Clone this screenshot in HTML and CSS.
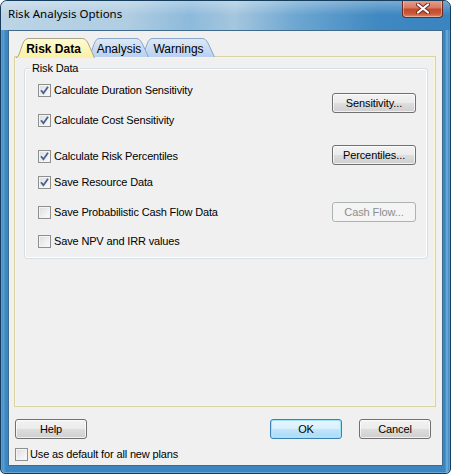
FILE: index.html
```html
<!DOCTYPE html>
<html lang="en">
<head>
<meta charset="utf-8">
<title>Risk Analysis Options</title>
<link rel="stylesheet" href="styles.css">
</head>
<body>
<div class="window">
  <div class="titlebar">
    <span class="title">Risk Analysis Options</span>
    <button class="close" type="button" aria-label="Close">
      <svg width="14" height="11" viewBox="0 0 14 11">
        <path d="M2 1.5 L12 9.5 M12 1.5 L2 9.5" stroke="#6b2a20" stroke-width="4" stroke-linecap="round"/>
        <path d="M2 1.5 L12 9.5 M12 1.5 L2 9.5" stroke="#ffffff" stroke-width="2.2" stroke-linecap="round"/>
      </svg>
    </button>
  </div>

  <div class="client">
    <div class="tabs">
      <div class="tab tab-active">
        <svg class="tab-shape" width="80" height="20" viewBox="0 0 80 20">
          <defs>
            <linearGradient id="gActive" x1="0" y1="0" x2="0" y2="1">
              <stop offset="0" stop-color="#fffbd2"/>
              <stop offset="1" stop-color="#fbf0a4"/>
            </linearGradient>
          </defs>
          <path d="M0.5 20 C6 20 6 0.5 13 0.5 H67 C70 0.5 71 2 73 5 L79.5 20" fill="url(#gActive)" stroke="#a9a58a"/>
        </svg>
        <span class="tab-label">Risk Data</span>
      </div>
      <div class="tab tab-second">
        <svg class="tab-shape" width="62" height="19" viewBox="0 0 62 19">
          <defs>
            <linearGradient id="gTab" x1="0" y1="0" x2="0" y2="1">
              <stop offset="0" stop-color="#dde9f7"/>
              <stop offset="1" stop-color="#b9d0ee"/>
            </linearGradient>
          </defs>
          <path d="M0.5 19 C5 19 6 0.5 12 0.5 H49 C52 0.5 53 2 55 5 L61.5 19" fill="url(#gTab)" stroke="#8aa6c9"/>
        </svg>
        <span class="tab-label">Analysis</span>
      </div>
      <div class="tab tab-third">
        <svg class="tab-shape" width="75" height="19" viewBox="0 0 75 19">
          <path d="M0.5 19 C5 19 6 0.5 12 0.5 H62 C65 0.5 66 2 68 5 L74.5 19" fill="url(#gTab)" stroke="#8aa6c9"/>
        </svg>
        <span class="tab-label">Warnings</span>
      </div>
    </div>

    <div class="panel">
      <div class="group">
        <span class="group-label">Risk Data</span>
        <div class="options">
          <label class="check row-1"><span class="box checked"></span>Calculate Duration Sensitivity</label>
          <button class="btn btn-sensitivity" type="button">Sensitivity...</button>
          <label class="check row-2"><span class="box checked"></span>Calculate Cost Sensitivity</label>
          <label class="check row-3"><span class="box checked"></span>Calculate Risk Percentiles</label>
          <button class="btn btn-percentiles" type="button">Percentiles...</button>
          <label class="check row-4"><span class="box checked"></span>Save Resource Data</label>
          <label class="check row-5"><span class="box"></span>Save Probabilistic Cash Flow Data</label>
          <button class="btn btn-cashflow" type="button" disabled>Cash Flow...</button>
          <label class="check row-6"><span class="box"></span>Save NPV and IRR values</label>
        </div>
      </div>
    </div>

    <div class="actions">
      <button class="btn btn-wide" type="button">Help</button>
      <span class="spacer"></span>
      <button class="btn btn-wide btn-default" type="button">OK</button>
      <button class="btn btn-wide" type="button">Cancel</button>
    </div>

    <label class="check default-check"><span class="box"></span>Use as default for all new plans</label>
  </div>
</div>
</body>
</html>
```

FILE: styles.css
```css
* {
  box-sizing: border-box;
}

html,
body {
  margin: 0;
  padding: 0;
  background: #ffffff;
}

body {
  font-family: "Liberation Sans", Arial, sans-serif;
  font-size: 11px;
  letter-spacing: -0.15px;
  color: #000000;
}

/* ---------- window frame ---------- */

.window {
  width: 451px;
  height: 474px;
  display: flex;
  flex-direction: column;
  padding: 0 7px 7px 7px;
  border-radius: 7px 7px 5px 5px;
  border: 1px solid #173d5c;
  background:
    linear-gradient(to right, #2a6ea5 0, #5aa0d3 2px, #3b86c1 5px, #3b86c1 calc(100% - 5px), #6eb3e0 calc(100% - 3px), #2a6ea5 100%);
  box-shadow: inset 0 0 0 1px rgba(255,255,255,0.25);
  overflow: hidden;
}

.titlebar {
  height: 29px;
  flex: none;
  display: flex;
  align-items: flex-start;
  justify-content: space-between;
  margin: 0 -7px;
  padding: 0 7px;
  background:
    linear-gradient(to bottom, rgba(255,255,255,0.3) 0, rgba(255,255,255,0) 14px),
    linear-gradient(to right, #bcd4e6 0%, #b0cde2 28%, #8dbadb 42%, #a5c6de 52%, #6ca6d1 66%, #3f88c1 84%, #3a84bf 100%);
}

.title {
  font-family: "Noto Sans", "Open Sans", sans-serif;
  font-size: 11.5px;
  letter-spacing: 0;
  line-height: 14px;
  margin-top: 6px;
  margin-left: 0;
  color: #000000;
}

.close {
  width: 41px;
  height: 18px;
  margin-top: -1px;
  margin-right: 0;
  padding: 0;
  border: 1px solid #6d2a22;
  border-top: none;
  border-radius: 0 0 4px 4px;
  background: linear-gradient(to bottom, #e5a291 0%, #d77a64 45%, #c44a2e 55%, #c9583a 80%, #e08866 100%);
  box-shadow: inset 0 0 0 1px rgba(255,255,255,0.35);
  display: flex;
  align-items: center;
  justify-content: center;
}

/* ---------- client area ---------- */

.client {
  flex: 1;
  background: #f0f0f0;
  border: 1px solid #3f6a8c;
  display: flex;
  flex-direction: column;
  padding: 7px 6px 0 5px;
}

/* ---------- tabs ---------- */

.tabs {
  height: 19px;
  display: flex;
  padding-left: 1px;
  position: relative;
  z-index: 2;
}

.tab {
  position: relative;
  height: 19px;
  display: flex;
  align-items: center;
  justify-content: center;
  font-size: 12px;
  letter-spacing: 0;
}

.tab-shape {
  position: absolute;
  left: 0;
  top: 0;
}

.tab-label {
  position: relative;
  line-height: 16px;
  margin-top: 2px;
}

.tab-active {
  width: 80px;
  z-index: 3;
  padding-right: 3px;
}

.tab-active .tab-label {
  font-weight: bold;
}

.tab-second {
  width: 62px;
  margin-left: -8px;
  z-index: 2;
  padding-left: 2px;
}

.tab-third {
  width: 75px;
  margin-left: -9px;
  z-index: 1;
  padding-left: 2px;
}

.panel {
  height: 351px;
  margin-top: -1px;
  border: 1px solid #d9d3a2;
  box-shadow: inset 0 0 0 1px #fbf7d6;
  padding: 11px 7px 0 9px;
  position: relative;
  z-index: 1;
}

/* ---------- group box ---------- */

.group {
  position: relative;
  border: 1px solid #d5dfe5;
  border-radius: 3px;
  box-shadow: inset 0 0 0 1px #ffffff;
  padding: 13px 11px 9px 13px;
}

.group-label {
  position: absolute;
  left: 5px;
  top: -8px;
  padding: 0 2px;
  background: #f0f0f0;
  line-height: 14px;
}

.options {
  display: grid;
  grid-template-columns: 1fr auto;
  grid-template-rows: 30px 36px 26px 30px 29px 16px;
  align-items: start;
}

.row-1 { grid-row: 1; }
.row-2 { grid-row: 2; }
.row-3 { grid-row: 3; }
.row-4 { grid-row: 4; }
.row-5 { grid-row: 5; }
.row-6 { grid-row: 6; }

/* ---------- checkboxes ---------- */

.check {
  grid-column: 1;
  height: 16px;
  display: flex;
  align-items: center;
  gap: 3px;
  line-height: 16px;
  white-space: nowrap;
}

.box {
  width: 13px;
  height: 13px;
  flex: none;
  border: 1px solid #8e8f8f;
  background: linear-gradient(135deg, #dcdcdc 0%, #f0f0f0 60%, #fbfbfb 100%);
  box-shadow: inset 0 0 0 1px #f4f4f4;
}

.box.checked {
  background:
    url("data:image/svg+xml;utf8,<svg xmlns='http://www.w3.org/2000/svg' width='11' height='11' viewBox='0 0 11 11'><path d='M2 5.2 L4.4 8.2 L9 1.8' fill='none' stroke='%234a5f95' stroke-width='1.8'/></svg>") center / 11px 11px no-repeat,
    linear-gradient(135deg, #dcdcdc 0%, #f0f0f0 60%, #fbfbfb 100%);
}

/* ---------- buttons ---------- */

.btn {
  grid-column: 2;
  height: 20px;
  padding: 0;
  font-family: "Liberation Sans", Arial, sans-serif;
  font-size: 11px;
  letter-spacing: -0.1px;
  color: #000000;
  border: 1px solid #707070;
  border-radius: 3px;
  background: linear-gradient(to bottom, #f3f3f3 0%, #ebebeb 48%, #dddddd 52%, #cfcfcf 100%);
  box-shadow: inset 0 0 0 1px rgba(255,255,255,0.7);
  line-height: 18px;
}

.btn-sensitivity {
  grid-row: 1;
  width: 84px;
  margin-top: 11px;
}

.btn-percentiles {
  grid-row: 3;
  width: 84px;
  margin-top: -3px;
}

.btn-cashflow {
  grid-row: 5;
  width: 84px;
  margin-top: -2px;
  color: #8d8d8d;
  border-color: #adb2b5;
  background: #f4f4f4;
  box-shadow: none;
}

/* ---------- bottom bar ---------- */

.actions {
  display: flex;
  height: 20px;
  margin: 12px 5px 0 1px;
  gap: 17px;
}

.spacer {
  flex: 1;
}

.btn-wide {
  width: 72px;
}

.btn-default {
  border-color: #3c7fb1;
  background: linear-gradient(to bottom, #eaf6fd 0%, #d9f0fc 48%, #bee6fd 52%, #a7d9f5 100%);
  box-shadow: inset 0 0 0 1px #9fe3fb, inset 0 0 2px 1px #c8f1ff;
}

.default-check {
  margin: 7px 0 0 1px;
  gap: 2px;
}
```
